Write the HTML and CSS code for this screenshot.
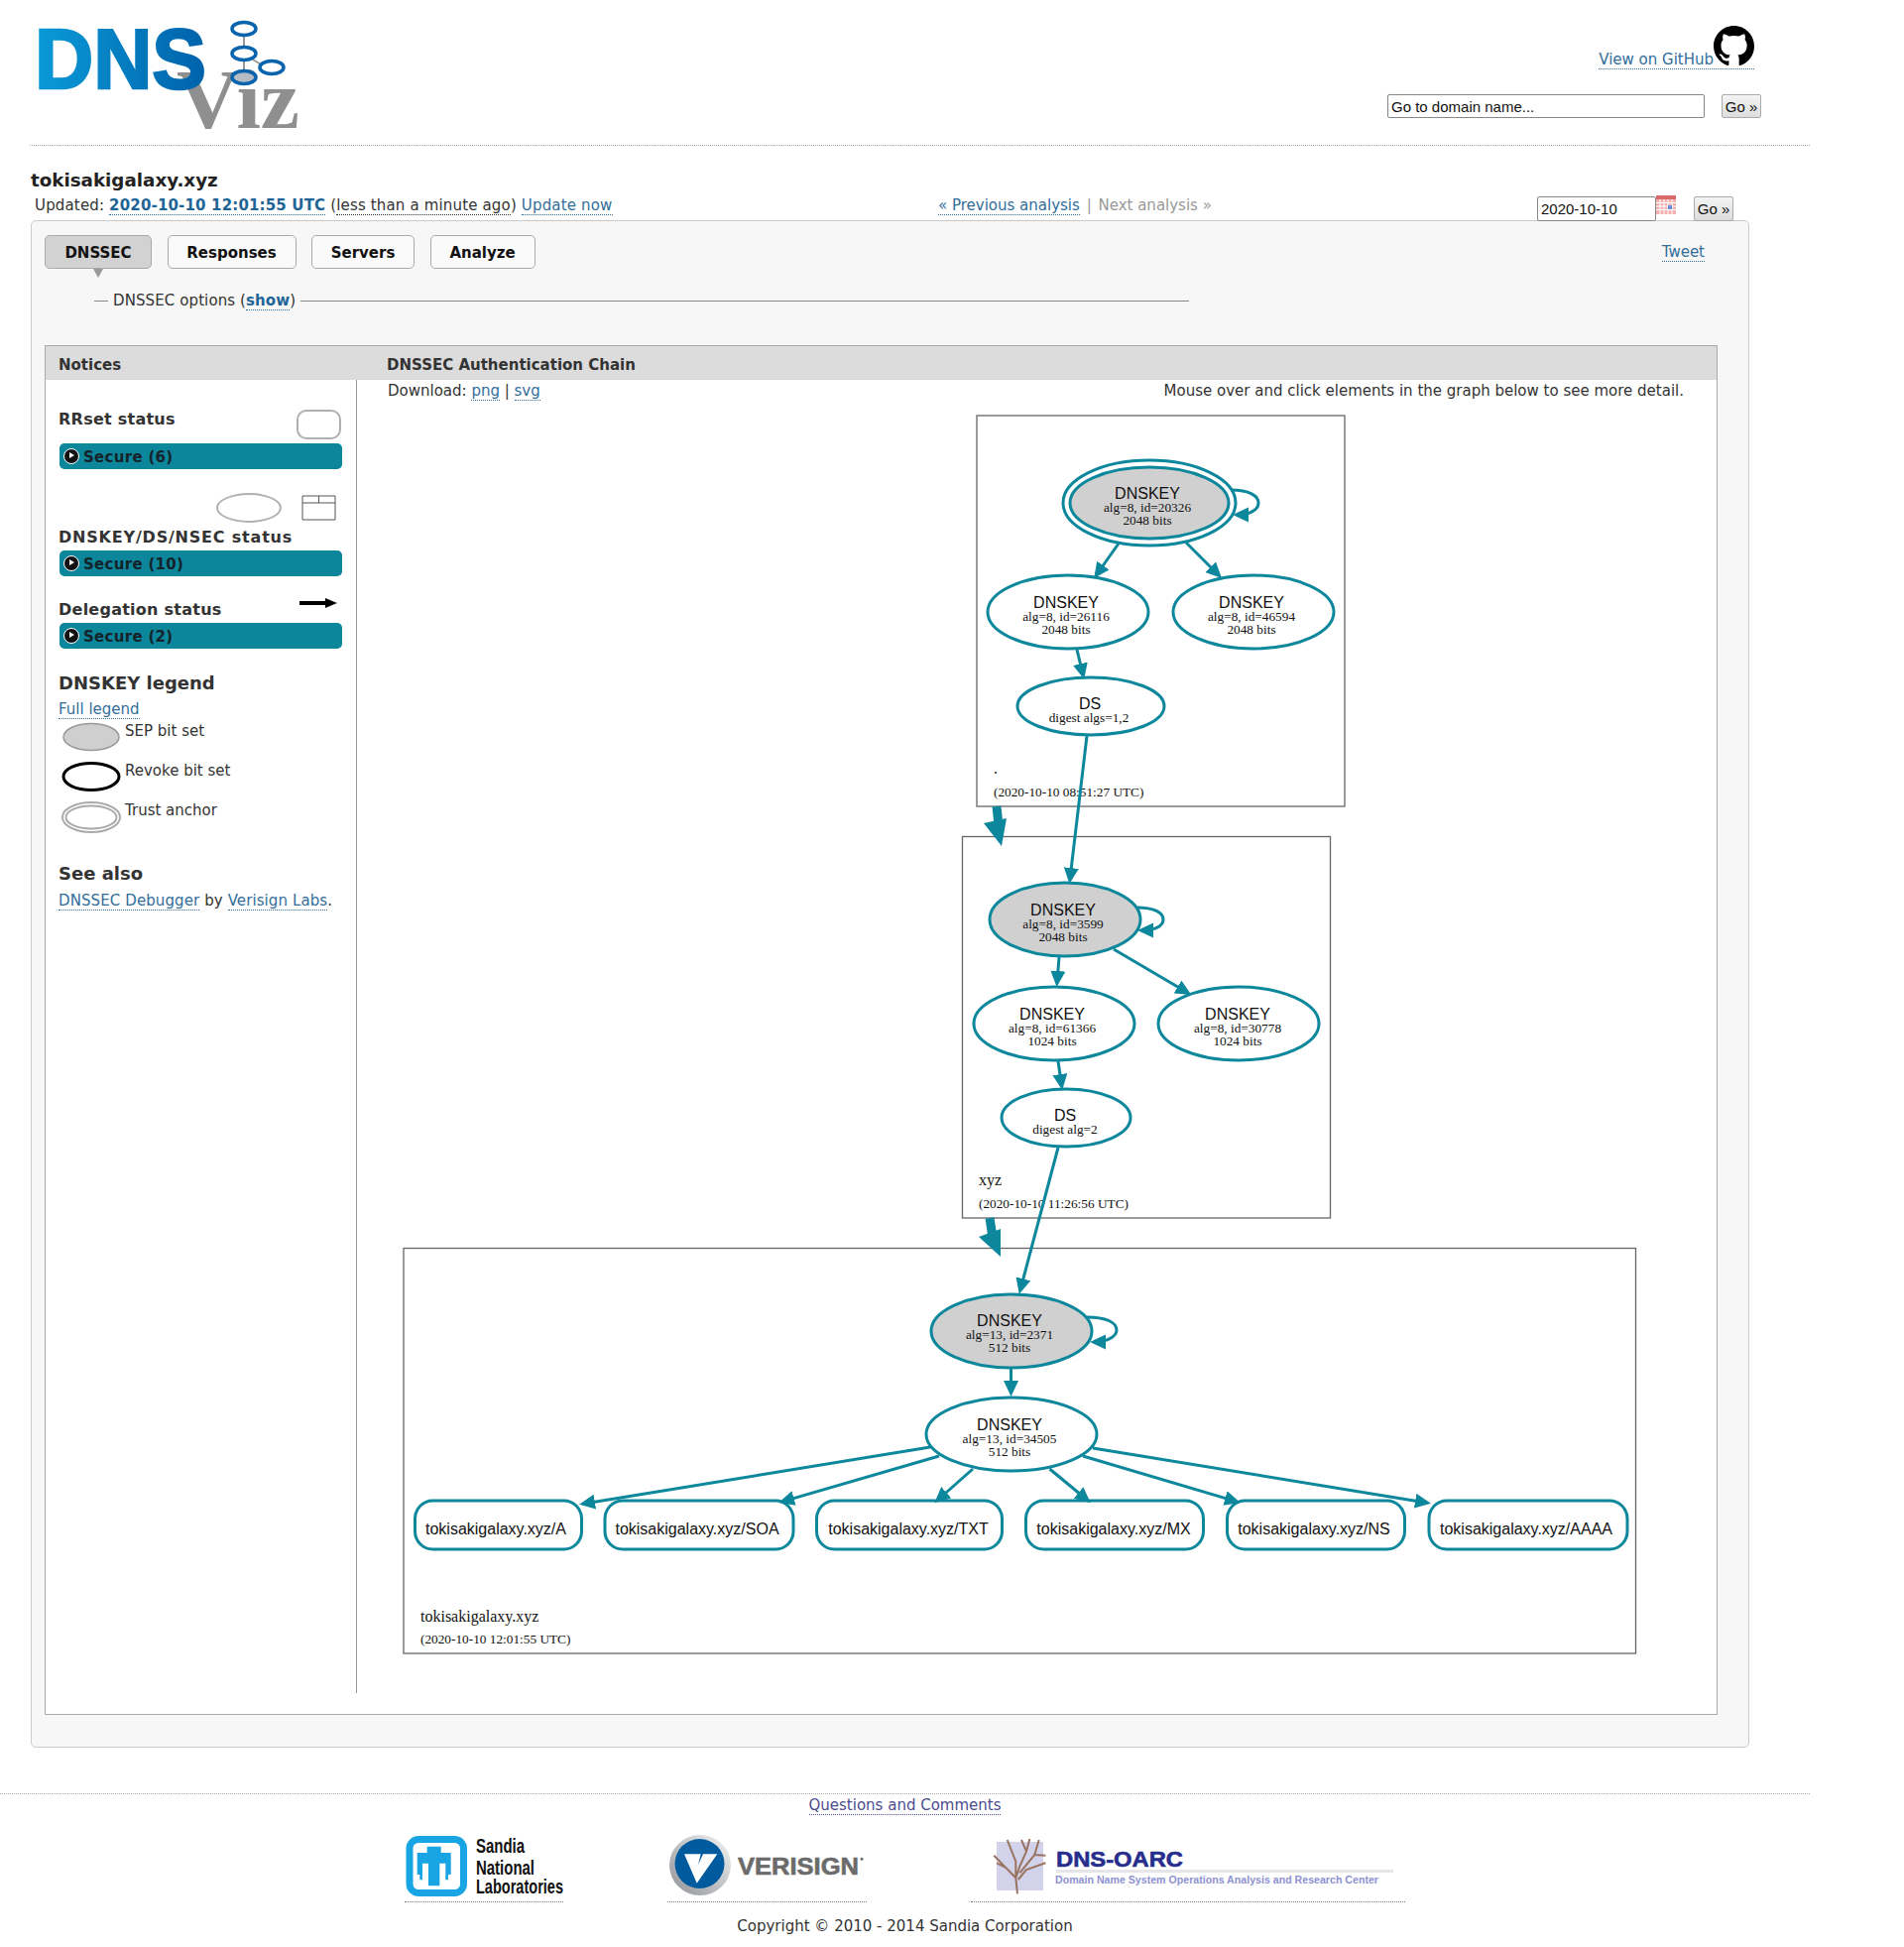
FILE: index.html
```html
<!DOCTYPE html>
<html lang="en">
<head>
    <meta charset="UTF-8">
    <title>tokisakigalaxy.xyz | DNSViz</title>
    <link rel="stylesheet" href="styles.css">
</head>
<body>
<div class="page">
    <header class="top">
        <svg class="logo" width="280" height="146" viewBox="30 0 280 146">
            <defs>
                <linearGradient id="dnsfill" x1="0" y1="0" x2="1" y2="0">
                    <stop offset="0" stop-color="#0a9ad8"/>
                    <stop offset="1" stop-color="#0062aa"/>
                </linearGradient>
            </defs>
            <text class="logo-viz" x="178" y="129" textLength="124" lengthAdjust="spacingAndGlyphs">Viz</text>
            <text class="logo-dns" x="35" y="89" textLength="173" lengthAdjust="spacingAndGlyphs" fill="url(#dnsfill)" stroke="url(#dnsfill)">DNS</text>
            <path class="logo-link" d="M246 36V47M246 61V71M255 60L263 65"/>
            <ellipse class="logo-ring" cx="246" cy="29" rx="12" ry="6.500"/>
            <ellipse class="logo-ring" cx="246" cy="54" rx="12" ry="6.500"/>
            <ellipse class="logo-ring" cx="274" cy="68" rx="12" ry="6.500"/>
            <ellipse class="logo-ring logo-ring-sep" cx="246" cy="78" rx="12" ry="6.500"/>
        </svg>
        <div class="top-tools">
            <a class="github" href="#">View on GitHub<svg class="octocat" width="41" height="41" viewBox="0 0 16 16"><path d="M8 0C3.58 0 0 3.58 0 8c0 3.54 2.29 6.53 5.47 7.59.4.07.55-.17.55-.38 0-.19-.01-.82-.01-1.49-2.01.37-2.53-.49-2.69-.94-.09-.23-.48-.94-.82-1.13-.28-.15-.68-.52-.01-.53.63-.01 1.08.58 1.23.82.72 1.21 1.87.87 2.33.66.07-.52.28-.87.51-1.07-1.78-.2-3.64-.89-3.64-3.95 0-.87.31-1.59.82-2.15-.08-.2-.36-1.02.08-2.12 0 0 .67-.21 2.2.82.64-.18 1.32-.27 2-.27.68 0 1.36.09 2 .27 1.53-1.04 2.2-.82 2.2-.82.44 1.1.16 1.92.08 2.12.51.56.82 1.27.82 2.15 0 3.07-1.87 3.75-3.65 3.95.29.25.54.73.54 1.48 0 1.07-.01 1.93-.01 2.2 0 .21.15.46.55.38A8.013 8.013 0 0016 8c0-4.42-3.58-8-8-8z"/></svg></a>
            <form class="search">
                <input class="field field-domain" type="text" value="Go to domain name...">
                <button class="go" type="button">Go »</button>
            </form>
        </div>
    </header>

    <h1 class="domain">tokisakigalaxy.xyz</h1>
    <div class="meta">
        <div class="updated">Updated: <a class="strong" href="#">2020-10-10 12:01:55 UTC</a> (<span class="dotted">less than a minute ago</span>) <a href="#">Update now</a></div>
        <div class="history"><a href="#">« Previous analysis</a> <span class="muted">|</span> <span class="muted">Next analysis »</span></div>
        <div class="datepick">
            <input class="field field-date" type="text" value="2020-10-10">
            <svg class="calendar" width="20" height="19" viewBox="0 0 20 19">
                <rect width="20" height="19" fill="#f3b0b0"/>
                <rect width="20" height="4" fill="#d96a6a"/>
                <path d="M0 7.500H20M0 11H20M0 14.500H20M4 4V19M8 4V19M12 4V19M16 4V19" stroke="#fff" stroke-width="1"/>
                <rect x="12" y="10" width="4" height="4" fill="#6a8fd8"/>
            </svg>
            <button class="go go-date" type="button">Go »</button>
        </div>
    </div>

    <main class="panel">
        <div class="tabbar">
            <nav class="tabs">
                <a class="tab tab-active" href="#">DNSSEC</a>
                <a class="tab tab-responses" href="#">Responses</a>
                <a class="tab tab-servers" href="#">Servers</a>
                <a class="tab tab-analyze" href="#">Analyze</a>
            </nav>
            <a class="tweet" href="#">Tweet</a>
        </div>
        <div class="options">
            <span class="options-dash"></span>
            <span class="options-label">DNSSEC options (<a class="strong" href="#">show</a>)</span>
            <span class="options-line"></span>
        </div>

        <section class="results">
            <div class="results-head">
                <div class="head-notices">Notices</div>
                <div>DNSSEC Authentication Chain</div>
            </div>
            <div class="results-body">
                <aside class="notices">
                    <div class="status-row">
                        <h3>RRset status</h3>
                        <span class="shape-rrset"></span>
                    </div>
                    <div class="secure"><span class="toggle"></span>Secure (6)</div>

                    <div class="shapes">
                        <span class="shape-ellipse"></span>
                        <svg width="35" height="26" viewBox="0 0 35 26"><path d="M1 1H34V25H1ZM1 8H34M17.500 1V8" fill="none" stroke="#555" stroke-width="1"/></svg>
                    </div>
                    <h3 class="after-shapes">DNSKEY/DS/NSEC status</h3>
                    <div class="secure secure-close"><span class="toggle"></span>Secure (10)</div>

                    <div class="status-row status-delegation">
                        <h3>Delegation status</h3>
                        <svg class="arrow-key" width="38" height="10" viewBox="0 0 38 10"><path d="M0 5H27" stroke="#000" stroke-width="4"/><path d="M26 0L38 5L26 10Z"/></svg>
                    </div>
                    <div class="secure secure-close"><span class="toggle"></span>Secure (2)</div>

                    <h2 class="legend-title">DNSKEY legend</h2>
                    <a class="legend-full" href="#">Full legend</a>
                    <div class="legend-row">
                        <svg width="62" height="36" viewBox="0 0 62 36"><ellipse cx="31" cy="16" rx="28" ry="13.500" fill="#cfcfcf" stroke="#999" stroke-width="1.500"/></svg>
                        <span>SEP bit set</span>
                    </div>
                    <div class="legend-row">
                        <svg width="62" height="36" viewBox="0 0 62 36"><ellipse cx="31" cy="16" rx="28" ry="13.500" fill="#fff" stroke="#000" stroke-width="3"/></svg>
                        <span>Revoke bit set</span>
                    </div>
                    <div class="legend-row">
                        <svg width="62" height="36" viewBox="0 0 62 36"><ellipse cx="31" cy="17" rx="29" ry="15" fill="#fff" stroke="#aaa" stroke-width="2"/><ellipse cx="31" cy="17" rx="25.500" ry="11.500" fill="#fff" stroke="#aaa" stroke-width="2"/></svg>
                        <span>Trust anchor</span>
                    </div>

                    <h2 class="see-also">See also</h2>
                    <p class="see-links"><a href="#">DNSSEC Debugger</a> by <a href="#">Verisign Labs</a>.</p>
                </aside>

                <div class="chain">
                    <div class="chain-tools">
                        <div>Download: <a href="#">png</a> | <a href="#">svg</a></div>
                        <div>Mouse over and click elements in the graph below to see more detail.</div>
                    </div>
                    <svg class="graph" width="1370" height="1270" viewBox="360 410 1370 1270">
                        <defs>
                            <marker id="head" markerUnits="userSpaceOnUse" markerWidth="18" markerHeight="16" refX="11" refY="7.500" orient="auto">
                                <path d="M0 0L16 7.500L0 15Z" fill="#0d879b"/>
                            </marker>
                        </defs>

                        <!-- root zone -->
                        <rect class="zone" x="985" y="419" width="371" height="394"/>
                        <text class="zone-name" x="1002" y="780">.</text>
                        <text class="zone-time" x="1002" y="803">(2020-10-10 08:51:27 UTC)</text>
                        <ellipse class="node" cx="1159" cy="507" rx="87" ry="43"/>
                        <ellipse class="node node-sep" cx="1159" cy="507" rx="80" ry="36"/>
                        <text class="node-type" x="1157" y="503">DNSKEY</text>
                        <text class="node-info" x="1157" y="516">alg=8, id=20326</text>
                        <text class="node-info" x="1157" y="529">2048 bits</text>
                        <ellipse class="node" cx="1077" cy="617" rx="81" ry="37"/>
                        <text class="node-type" x="1075" y="613">DNSKEY</text>
                        <text class="node-info" x="1075" y="626">alg=8, id=26116</text>
                        <text class="node-info" x="1075" y="639">2048 bits</text>
                        <ellipse class="node" cx="1264" cy="617" rx="81" ry="37"/>
                        <text class="node-type" x="1262" y="613">DNSKEY</text>
                        <text class="node-info" x="1262" y="626">alg=8, id=46594</text>
                        <text class="node-info" x="1262" y="639">2048 bits</text>
                        <ellipse class="node" cx="1100" cy="712" rx="74" ry="29"/>
                        <text class="node-type" x="1099" y="715">DS</text>
                        <text class="node-info" x="1098" y="728">digest algs=1,2</text>
                        <path class="edge" d="M1241 494C1260 494 1269 500 1269 507C1269 514 1260 519 1248 519"/>
                        <path class="edge" d="M1128 548L1106 579"/>
                        <path class="edge" d="M1196 547L1228.500 579.500"/>
                        <path class="edge" d="M1086 655L1092 680"/>

                        <!-- xyz -->
                        <rect class="zone" x="970.500" y="843.500" width="371" height="384.500"/>
                        <text class="zone-name" x="987" y="1195">xyz</text>
                        <text class="zone-time" x="987" y="1218">(2020-10-10 11:26:56 UTC)</text>
                        <ellipse class="node node-sep" cx="1074" cy="927" rx="76" ry="37"/>
                        <text class="node-type" x="1072" y="923">DNSKEY</text>
                        <text class="node-info" x="1072" y="936">alg=8, id=3599</text>
                        <text class="node-info" x="1072" y="949">2048 bits</text>
                        <ellipse class="node" cx="1063" cy="1032" rx="81" ry="37"/>
                        <text class="node-type" x="1061" y="1028">DNSKEY</text>
                        <text class="node-info" x="1061" y="1041">alg=8, id=61366</text>
                        <text class="node-info" x="1061" y="1054">1024 bits</text>
                        <ellipse class="node" cx="1249" cy="1032" rx="81" ry="37"/>
                        <text class="node-type" x="1248" y="1028">DNSKEY</text>
                        <text class="node-info" x="1248" y="1041">alg=8, id=30778</text>
                        <text class="node-info" x="1248" y="1054">1024 bits</text>
                        <ellipse class="node" cx="1075" cy="1127" rx="65" ry="29"/>
                        <text class="node-type" x="1074" y="1130">DS</text>
                        <text class="node-info" x="1074" y="1143">digest alg=2</text>
                        <path class="edge" d="M1146 915C1164 915 1173 920 1173 927C1173 934 1164 938 1152 938"/>
                        <path class="edge" d="M1068 965L1066 990"/>
                        <path class="edge" d="M1123 957L1197 1000.500"/>
                        <path class="edge" d="M1067 1070L1070.500 1094"/>

                        <!-- tokisakigalaxy.xyz -->
                        <rect class="zone" x="407" y="1258.500" width="1242.500" height="408.500"/>
                        <text class="zone-name" x="424" y="1635">tokisakigalaxy.xyz</text>
                        <text class="zone-time" x="424" y="1657">(2020-10-10 12:01:55 UTC)</text>
                        <ellipse class="node node-sep" cx="1020" cy="1342" rx="81" ry="37"/>
                        <text class="node-type" x="1018" y="1337">DNSKEY</text>
                        <text class="node-info" x="1018" y="1350">alg=13, id=2371</text>
                        <text class="node-info" x="1018" y="1363">512 bits</text>
                        <ellipse class="node" cx="1020" cy="1446" rx="86" ry="37"/>
                        <text class="node-type" x="1018" y="1442">DNSKEY</text>
                        <text class="node-info" x="1018" y="1455">alg=13, id=34505</text>
                        <text class="node-info" x="1018" y="1468">512 bits</text>
                        <rect class="rrset" x="418.500" y="1513" width="168" height="49" rx="18"/>
                        <text class="rrset-name" x="500" y="1547">tokisakigalaxy.xyz/A</text>
                        <rect class="rrset" x="610" y="1513" width="190" height="49" rx="18"/>
                        <text class="rrset-name" x="703" y="1547">tokisakigalaxy.xyz/SOA</text>
                        <rect class="rrset" x="823.500" y="1513" width="187" height="49" rx="18"/>
                        <text class="rrset-name" x="916" y="1547">tokisakigalaxy.xyz/TXT</text>
                        <rect class="rrset" x="1034.500" y="1513" width="179" height="49" rx="18"/>
                        <text class="rrset-name" x="1123" y="1547">tokisakigalaxy.xyz/MX</text>
                        <rect class="rrset" x="1237.500" y="1513" width="179" height="49" rx="18"/>
                        <text class="rrset-name" x="1325" y="1547">tokisakigalaxy.xyz/NS</text>
                        <rect class="rrset" x="1441" y="1513" width="200" height="49" rx="18"/>
                        <text class="rrset-name" x="1539" y="1547">tokisakigalaxy.xyz/AAAA</text>
                        <path class="edge" d="M1096 1328C1115 1328 1126 1333 1126 1341C1126 1348 1115 1353 1104 1353"/>
                        <path class="edge" d="M1019.500 1380V1403"/>
                        <path class="edge" d="M938 1459L589 1516"/>
                        <path class="edge" d="M947 1468L790 1513.600"/>
                        <path class="edge" d="M981 1481L946 1512"/>
                        <path class="edge" d="M1058.500 1481L1096 1512"/>
                        <path class="edge" d="M1092 1468L1246 1513.600"/>
                        <path class="edge" d="M1102 1460L1438 1515"/>

                        <!-- between zones -->
                        <path class="edge" d="M1096 742L1079 886"/>
                        <path class="edge" d="M1067 1157L1029 1300"/>
                        <path class="edge-zone" d="M1005 813L1007 832"/>
                        <polygon class="head-zone" points="992,830 1015,825 1010,853"/>
                        <path class="edge-zone" d="M998 1228L1001 1248"/>
                        <polygon class="head-zone" points="987,1247 1009,1239 1009,1267"/>
                    </svg>
                </div>
            </div>
        </section>
    </main>

    <footer class="bottom">
        <a class="questions" href="#">Questions and Comments</a>
        <div class="sponsors">
            <a class="sponsor sponsor-sandia" href="#">
                <svg width="160" height="66" viewBox="0 0 160 66">
                    <rect x="5" y="4.500" width="54.500" height="54" rx="9" fill="#fff" stroke="#19a5e3" stroke-width="7"/>
                    <path d="M22.700 11.700H36.700V18H46.700V40H44V45.300H41.300V28.700H35.300V51.300H24V28.700H18V45.300H15.300V40H12.700V18H22.700Z" fill="#19a5e3"/>
                    <text class="sandia-name" x="72" y="18" textLength="49" lengthAdjust="spacingAndGlyphs">Sandia</text>
                    <text class="sandia-name" x="72" y="40" textLength="59" lengthAdjust="spacingAndGlyphs">National</text>
                    <text class="sandia-name" x="72" y="59" textLength="88" lengthAdjust="spacingAndGlyphs">Laboratories</text>
                </svg>
            </a>
            <a class="sponsor sponsor-verisign" href="#">
                <svg width="201" height="66" viewBox="0 0 201 66">
                    <defs>
                        <linearGradient id="vsring" x1="1" y1="0" x2="0" y2="1">
                            <stop offset="0" stop-color="#f4f4f4"/>
                            <stop offset="1" stop-color="#8f9296"/>
                        </linearGradient>
                    </defs>
                    <ellipse cx="33" cy="30.500" rx="31" ry="30.500" fill="url(#vsring)"/>
                    <circle cx="32.500" cy="29" r="25" fill="#005a9e"/>
                    <path d="M17 19.300H33.700L31 30L36 19.300H50.300L29.700 48.700Z" fill="#fff"/>
                    <text class="verisign-name" x="71" y="40" textLength="122" lengthAdjust="spacingAndGlyphs">VERISIGN</text>
                    <circle cx="196" cy="24.300" r="1.500" fill="#6b6b6b"/>
                </svg>
            </a>
            <a class="sponsor sponsor-oarc" href="#">
                <svg width="438" height="66" viewBox="0 0 438 66">
                    <rect x="26" y="7" width="47" height="49" fill="#d2d2ea"/>
                    <path d="M47 59.300L45.300 43.300L23.300 20.700M36 33.300L26 28.300M45.300 43.300V26.700L36.700 5M45.300 43.300L49.300 31.700L56 16.700L51 5M56 16.700L59.300 4M49.300 38.300L64.300 20L68.700 5M64.300 20L75.300 20.700M47.700 45L56 35L75.300 28.300" fill="none" stroke="#9a7460" stroke-width="2"/>
                    <text class="oarc-name" x="86" y="32" textLength="128" lengthAdjust="spacingAndGlyphs">DNS-OARC</text>
                    <rect x="86" y="35" width="340" height="3" fill="#e6e6ea"/>
                    <text class="oarc-sub" x="85" y="49" textLength="326" lengthAdjust="spacingAndGlyphs">Domain Name System Operations Analysis and Research Center</text>
                </svg>
            </a>
        </div>
        <div class="copyright">Copyright © 2010 - 2014 Sandia Corporation</div>
    </footer>
</div>
</body>
</html>
```

FILE: styles.css
```css
body {
    margin: 0;
    background: #fff;
    color: #333;
    font-family: "DejaVu Sans", sans-serif;
    font-size: 15px;
    line-height: 18px;
}
a {
    color: #336e9b;
    text-decoration: none;
    border-bottom: 1px dotted #336e9b;
}
.page {
    width: 1825px;
}
.strong {
    font-weight: bold;
    color: #1f6496;
}
.dotted {
    border-bottom: 1px dotted #333;
}
.muted {
    color: #999;
}

/* header */
.top {
    display: flex;
    justify-content: space-between;
    height: 146px;
    margin-left: 30px;
    border-bottom: 1px dotted #aaa;
}
.logo {
    display: block;
}
.logo-dns {
    font: bold 86px "Liberation Sans", sans-serif;
    stroke-width: 2.500;
}
.logo-viz {
    font: bold 84px "Liberation Serif", serif;
    fill: #8f8f8f;
}
.logo-ring {
    fill: none;
    stroke: #0a63ad;
    stroke-width: 3.500;
}
.logo-ring-sep {
    fill: #b5bcc4;
}
.logo-link {
    fill: none;
    stroke: #999;
    stroke-width: 2;
}
.top-tools {
    display: flex;
    flex-direction: column;
    align-items: flex-end;
    width: 378px;
    margin-right: 49px;
}
.github {
    display: flex;
    align-items: flex-end;
    height: 43px;
    margin-top: 26px;
    margin-right: 7px;
}
.octocat {
    display: block;
    margin-bottom: 2px;
}
.search {
    display: flex;
    align-items: center;
    gap: 17px;
    margin-top: 25px;
}
.field {
    box-sizing: border-box;
    height: 24px;
    padding: 0 3px;
    border: 1px solid #888;
    border-radius: 2px;
    background: #fff;
    color: #111;
    font: 15px "Liberation Sans", sans-serif;
}
.field-domain {
    width: 320px;
}
.field-date {
    width: 120px;
    height: 25px;
}
.go {
    box-sizing: border-box;
    width: 40px;
    height: 24px;
    padding: 0;
    border: 1px solid #aaa;
    border-radius: 2px;
    background: linear-gradient(#f4f4f4, #ddd);
    color: #111;
    font: 15px "Liberation Sans", sans-serif;
}

/* title */
.domain {
    margin: 25px 0 0 31px;
    color: #222;
    font-size: 18.300px;
    line-height: 20px;
}
.meta {
    display: flex;
    height: 24px;
    margin-top: 6px;
    margin-left: 35px;
}
.updated {
    width: 911px;
    letter-spacing: .16px;
}
.history {
    width: 604px;
}
.history .muted {
    margin-left: 2px;
}
.datepick {
    display: flex;
    align-items: flex-start;
}
.calendar {
    margin-top: -1px;
}
.go-date {
    height: 25px;
    margin-left: 18px;
}

/* main panel */
.panel {
    box-sizing: border-box;
    width: 1733px;
    height: 1540px;
    margin-left: 31px;
    padding: 14px 31px 0 13px;
    border: 1px solid #ccc;
    border-radius: 5px;
    background: #f7f7f7;
}
.tabbar {
    display: flex;
    justify-content: space-between;
    align-items: flex-start;
}
.tabs {
    display: flex;
    gap: 15.500px;
}
.tab {
    box-sizing: border-box;
    display: block;
    width: 108px;
    height: 34px;
    border: 1px solid #aaa;
    border-radius: 5px;
    background: #fafafa;
    color: #111;
    font-weight: bold;
    line-height: 34px;
    text-align: center;
}
.tab-active {
    position: relative;
    background: #d2d2d2;
}
.tab-active::after {
    content: "";
    position: absolute;
    left: 48px;
    top: 33px;
    border-top: 9px solid #999;
    border-left: 5px solid transparent;
    border-right: 5px solid transparent;
}
.tab-responses {
    width: 130px;
}
.tab-servers {
    width: 104px;
}
.tab-analyze {
    width: 106px;
}
.tweet {
    margin-top: 8px;
    margin-right: 13px;
}
.options {
    display: flex;
    align-items: center;
    gap: 5px;
    width: 1104px;
    height: 18px;
    margin: 23px 0 0 50px;
}
.options-dash {
    width: 14px;
    border-top: 1px solid #888;
}
.options-label {
    letter-spacing: .1px;
}
.options-line {
    flex: 1;
    border-top: 1px solid #888;
}
.results {
    box-sizing: border-box;
    width: 1687px;
    height: 1381px;
    margin-top: 36px;
    border: 1px solid #aaa;
    background: #fff;
}
.results-head {
    display: flex;
    height: 34px;
    background: #dcdcdc;
    color: #333;
    font-weight: bold;
    line-height: 38px;
}
.head-notices {
    width: 344px;
    padding-left: 13px;
    box-sizing: border-box;
}
.results-body {
    display: flex;
}

/* notices column */
.notices {
    box-sizing: border-box;
    width: 314px;
    height: 1324px;
    padding: 30px 0 0 13px;
    border-right: 1px solid #999;
}
.notices h3 {
    margin: 0;
    padding-top: 2px;
    color: #333;
    font-size: 16px;
    letter-spacing: .25px;
    line-height: 16px;
}
.status-row {
    display: flex;
    justify-content: space-between;
    align-items: flex-start;
    width: 285px;
    height: 30px;
}
.shape-rrset {
    box-sizing: border-box;
    width: 45px;
    height: 30px;
    border: 2px solid #b0b0b0;
    border-radius: 10px;
}
.secure {
    box-sizing: border-box;
    display: flex;
    align-items: center;
    gap: 4px;
    width: 285px;
    height: 26px;
    margin: 4px 0 0 1px;
    padding: 2px 0 0 4px;
    border-radius: 5px;
    background: #0c869b;
    color: #14232a;
    font-weight: bold;
    letter-spacing: .3px;
}
.secure-close {
    margin-top: 5px;
}
.toggle {
    box-sizing: border-box;
    position: relative;
    display: block;
    width: 16px;
    height: 16px;
    margin-top: -2px;
    border: 1.500px solid #fff;
    border-radius: 50%;
    background: #111;
}
.toggle::after {
    content: "";
    position: absolute;
    left: 4.500px;
    top: 3px;
    border-left: 5px solid #fff;
    border-top: 3.500px solid transparent;
    border-bottom: 3.500px solid transparent;
}
.shapes {
    display: flex;
    justify-content: flex-end;
    align-items: center;
    gap: 20px;
    width: 280px;
    height: 30px;
    margin-top: 24px;
}
.shape-ellipse {
    box-sizing: border-box;
    width: 66px;
    height: 30px;
    border: 2px solid #b0b0b0;
    border-radius: 50%;
}
.notices .after-shapes {
    margin-top: 5px;
    letter-spacing: .8px;
}
.status-row.status-delegation {
    width: 281px;
    height: 18px;
    margin-top: 24px;
}
.arrow-key {
    margin-top: -2px;
}
.legend-title {
    margin: 25px 0 0;
    color: #333;
    font-size: 18px;
    line-height: 20px;
}
.legend-full {
    display: inline-block;
    margin-top: 8px;
    line-height: 17px;
}
.legend-row {
    display: flex;
    height: 40px;
    margin-left: 2px;
}
.legend-row svg {
    display: block;
    margin-top: 2px;
}
.legend-row span {
    margin-top: 3px;
    margin-left: 3px;
}
.see-also {
    margin: 26px 0 0;
    color: #333;
    font-size: 18px;
    line-height: 20px;
}
.see-links {
    margin: 8px 0 0;
    letter-spacing: .1px;
}

/* graph column */
.chain {
    flex: 1;
}
.chain-tools {
    display: flex;
    justify-content: space-between;
    height: 27px;
    padding: 2px 33px 0 31px;
    box-sizing: border-box;
}
.graph {
    display: block;
    font-family: "Liberation Serif", serif;
}
.zone {
    fill: #fff;
    stroke: #666;
    stroke-width: 1.300;
}
.node {
    fill: #fff;
    stroke: #0d879b;
    stroke-width: 3;
}
.node-sep {
    fill: #d0d0d0;
}
.rrset {
    fill: #fff;
    stroke: #0d879b;
    stroke-width: 3;
}
.edge {
    fill: none;
    stroke: #0d879b;
    stroke-width: 3;
    marker-end: url(#head);
}
.edge-zone {
    fill: none;
    stroke: #0d879b;
    stroke-width: 9;
}
.head-zone {
    fill: #0d879b;
}
.node-type {
    fill: #111;
    font: 16px "Liberation Sans", sans-serif;
    text-anchor: middle;
}
.node-info {
    fill: #111;
    font: 13.300px "Liberation Serif", serif;
    text-anchor: middle;
}
.rrset-name {
    fill: #111;
    font: 16px "Liberation Sans", sans-serif;
    text-anchor: middle;
}
.zone-name {
    fill: #111;
    font: 16px "Liberation Serif", serif;
}
.zone-time {
    fill: #111;
    font: 13.300px "Liberation Serif", serif;
}

/* footer */
.bottom {
    margin-top: 46px;
    padding-top: 2px;
    border-top: 1px dotted #aaa;
    text-align: center;
}
.questions {
    color: #4d4d8f;
    border-bottom-color: #4d4d8f;
}
.sponsors {
    display: flex;
    height: 72px;
    margin-top: 21px;
    margin-left: 408px;
}
.sponsor {
    display: block;
    height: 67px;
    border-bottom: 1px dotted #777;
}
.sponsor svg {
    display: block;
}
.sponsor-verisign {
    margin-left: 105px;
}
.sponsor-oarc {
    margin-left: 105px;
}
.sandia-name {
    fill: #111;
    font: bold 21px "Liberation Sans", sans-serif;
}
.verisign-name {
    fill: #6b6b6b;
    stroke: #6b6b6b;
    stroke-width: .6;
    font: bold 24px "Liberation Sans", sans-serif;
}
.oarc-name {
    fill: #262d8c;
    stroke: #262d8c;
    stroke-width: .6;
    font: bold 22px "Liberation Sans", sans-serif;
}
.oarc-sub {
    fill: #8d92d2;
    font: bold 11px "Liberation Sans", sans-serif;
}
.copyright {
    margin-top: 11px;
}
```
